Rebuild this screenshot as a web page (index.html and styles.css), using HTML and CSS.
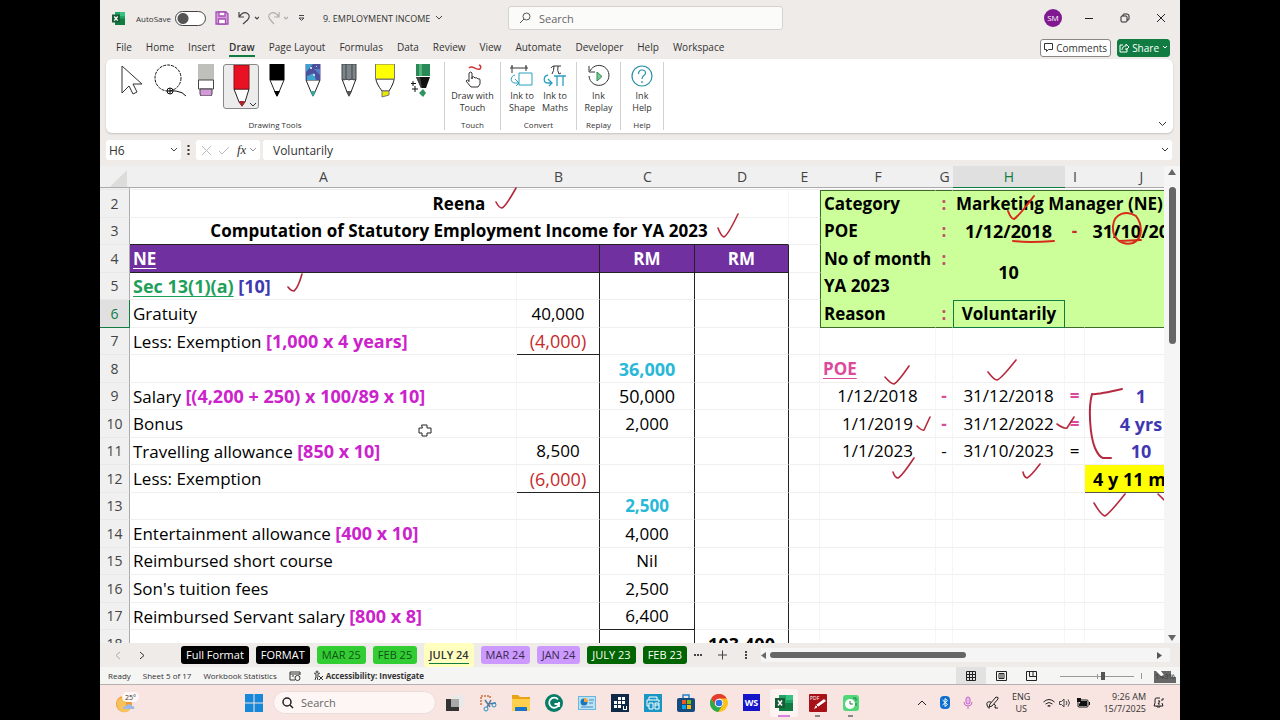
FILE: index.html
```html
<!DOCTYPE html>
<html lang="en">
<head>
<meta charset="utf-8">
<title>9. EMPLOYMENT INCOME - Excel</title>
<link rel="stylesheet" href="styles.css">
</head>
<body>
<div class="window">
  <header class="titlebar">
    <div class="quick">
      <svg class="app" width="13" height="13" viewBox="0 0 13 13"><path fill="#21a366" d="M3 0h10v13H3z"/><path fill="#107c41" d="M3 6.500h10V13H3z"/><path fill="#33c481" d="M8 0h5v4H8z"/><path fill="#185c37" d="M0 2.500h8v8H0z"/><path stroke="#fff" stroke-width="1.200" d="M2.200 4.500l3.500 4.200M5.700 4.500L2.200 8.700"/></svg>
      <label class="autosave">AutoSave <input type="checkbox" class="toggle"></label>
      <button class="plain" aria-label="Save"><svg width="14" height="14" viewBox="0 0 14 14" fill="none" stroke="#a54fb5" stroke-width="1.300"><path fill="#d9a0e0" d="M1 1h10l2 2v10H1z"/><path fill="#fff" d="M4 1h6v4H4zM3.500 8h7v5h-7z"/></svg></button>
      <button class="plain undo" aria-label="Undo"><svg width="21" height="14" viewBox="0 0 21 14" fill="none" stroke="#444" stroke-width="1.200"><path d="M1 1v5h5M1.500 5.500C4 2 7 1 9.500 2.500s2 4.500 0 6.500L5 13"/><path d="M17 6l2 2 2-2"/></svg></button>
      <button class="plain" aria-label="Redo"><svg width="21" height="14" viewBox="0 0 21 14" fill="none" stroke="#b0aeac" stroke-width="1.200"><path d="M11 1v5H6M10.500 5.500C8 2 5 1 2.500 2.500s-2 4.500 0 6.500L6 13"/><path d="M16 6l2 2 2-2"/></svg></button>
      <button class="plain" aria-label="Customise toolbar"><svg width="7" height="8" viewBox="0 0 7 8" fill="none" stroke="#444"><path d="M1 1.500h5M1 4l2.500 2.500L6 4z"/></svg></button>
      <button class="plain doc">9. EMPLOYMENT INCOME <svg width="8" height="6" viewBox="0 0 8 6" fill="none" stroke="#444"><path d="M1 1l3 3 3-3"/></svg></button>
    </div>
    <label class="search"><svg width="12" height="12" viewBox="0 0 12 12" fill="none" stroke="#555"><circle cx="7.500" cy="4.500" r="3.500"/><path d="M5 7L1 11"/></svg><input type="text" placeholder="Search" aria-label="Search"></label>
    <div class="controls">
      <span class="avatar">SM</span>
      <button class="plain" aria-label="Minimise"><svg width="10" height="10" viewBox="0 0 10 10" stroke="#222"><path d="M1 5.500h8"/></svg></button>
      <button class="plain" aria-label="Restore"><svg width="10" height="10" viewBox="0 0 10 10" fill="none" stroke="#222"><rect x="1" y="3" width="6" height="6" rx="1"/><path d="M3 3V2q0-1 1-1h3q2 0 2 2v3q0 1-1 1H7"/></svg></button>
      <button class="plain" aria-label="Close"><svg width="10" height="10" viewBox="0 0 10 10" stroke="#222"><path d="M1 1l8 8M9 1L1 9"/></svg></button>
    </div>
  </header>

  <nav class="menu">
    <button>File</button><button>Home</button><button>Insert</button><button class="on">Draw</button><button>Page Layout</button><button>Formulas</button><button>Data</button><button>Review</button><button>View</button><button>Automate</button><button>Developer</button><button>Help</button><button>Workspace</button>
    <span class="actions">
      <button class="comments"><svg width="9" height="9" viewBox="0 0 9 9" fill="none" stroke="#333"><path d="M.5.500h8v6h-4l-2 2v-2h-2z"/></svg>Comments</button>
      <button class="share"><svg width="10" height="10" viewBox="0 0 10 10" fill="none" stroke="#fff"><path d="M4 2H1v7h7V6M3 7c0-3 2-4 4-4V1l3 3-3 3V5"/></svg>Share<svg width="6" height="5" viewBox="0 0 6 5" fill="none" stroke="#fff"><path d="M1 1l2 2 2-2"/></svg></button>
    </span>
  </nav>

  <section class="ribbon">
    <div class="group drawing">
      <div class="tools">
        <button aria-label="Select"><svg width="24" height="32" viewBox="0 0 24 32" fill="#fff" stroke="#333"><path d="M2 2v27l7-7 4 8 4-2-4-8h9z"/></svg></button>
        <button aria-label="Lasso"><svg width="34" height="34" viewBox="0 0 34 34" fill="none" stroke="#111"><circle cx="15" cy="14" r="13" stroke-dasharray="3 1"/><circle cx="17" cy="27" r="3"/><path d="M14 27h9q7 1 10 5M17 24v6"/></svg></button>
        <button aria-label="Eraser"><svg width="16" height="32" viewBox="0 0 16 32" stroke="#444"><path fill="#bfbfbb" stroke="none" d="M0 0h16v16H0z"/><path fill="#fff" d="M.5 16h15v9H.5z"/><path fill="#d29bd8" d="M2 25h12v5l-1 2H3l-1-2z"/></svg></button>
        <button class="picked" aria-label="Red pen"><svg width="34" height="42" viewBox="0 0 34 42" fill="none"><path fill="#fff" stroke="#222" d="M10 24l5 13 3 4 3-4 4-13z"/><path fill="#e81224" stroke="#8c1018" d="M10 0h15v24H10z"/><path fill="#b3202b" d="M15 36h6l-3 6z"/><path stroke="#333" d="M26 38l3 3 3-3"/></svg></button>
        <button aria-label="Black pen"><svg width="16" height="34" viewBox="0 0 16 34"><path fill="#fff" stroke="#222" d="M1 16l5 12 2 4 2-4 5-12z"/><path d="M.500 0h15v16H.500zM5 27h6l-3 6z"/></svg></button>
        <button aria-label="Galaxy pen"><svg width="16" height="34" viewBox="0 0 16 34"><path fill="#fff" stroke="#222" d="M1 16l5 12 2 4 2-4 5-12z"/><path fill="#4b4f9c" d="M.500 0h15v16H.500z"/><path fill="#3fa2cf" d="M1 0h7L1 8zM2 12l7-3 2 7H2z"/><path fill="#5a7cc4" d="M9 5h6v6z"/><path fill="#c3d4ee" d="M5 3h2v2H5zM11 2h1v1h-1zM8 10h2v2H8z"/><path fill="#3fa39a" d="M5 27h6l-3 6z"/></svg></button>
        <button aria-label="Pencil"><svg width="16" height="34" viewBox="0 0 16 34"><path fill="#fff" stroke="#222" d="M1 15l5 13 2 4 2-4 5-13z"/><path fill="#7b868c" stroke="#444" d="M1 0h14v15l-2 1-2-1-3 1-3-1-2 1-2-1zM5 0v15M11 0v15"/><path fill="#555" d="M5 27h6l-3 6z"/></svg></button>
        <button aria-label="Highlighter"><svg width="20" height="34" viewBox="0 0 20 34"><path fill="#fff" stroke="#222" d="M1 15q0 4 6 12h7q5-8 5-12z"/><path fill="#ff0" stroke="#777" d="M.5 0h19v15H.5z"/><path fill="#e8e800" stroke="#777" d="M7 27h7v4l-7 2z"/></svg></button>
        <button aria-label="Action pen"><svg width="20" height="34" viewBox="0 0 20 34"><path fill="#2a8a57" d="M5 0h14v12H5z"/><path fill="#54b27c" d="M8 0h3v12H8z"/><path fill="#111" d="M5 13h14l-4 11h-5z"/><path fill="#444" d="M5 13h4l2 11h-1z"/><path fill="#2f9362" d="M12 25l3 4-3 4-4-4z"/><path stroke="#111" d="M2 17v5M0 19.500h5M4 22v6M1 25h6"/></svg></button>
      </div>
      <span class="caption">Drawing Tools</span>
    </div>
    <div class="group touch">
      <div class="row"><button><svg width="24" height="24" viewBox="0 0 24 24" fill="none" stroke="#333"><path stroke="#d13438" stroke-width="1.500" d="M8 4c4-4 6 3 11 1q2-3-1-4"/><path d="M8 18V9q2-2 3 0v6-2q2-1 3 1 2-1 3 1 2-1 2 1v4l-2 3h-7l-5-6q1-2 3 0"/></svg>Draw with<br>Touch</button></div>
      <span class="caption">Touch</span>
    </div>
    <div class="group convert">
      <div class="row">
        <button><svg width="24" height="24" viewBox="0 0 24 24" fill="none" stroke="#333"><path d="M2 2v7M16 2v5M0 4h18M2 1v2M16 1v2"/><path stroke="#2a9fc0" d="M9 9h13v12H9zM5 11c-5 1-5 8 0 8h3M5 15l4 4-3 3"/></svg>Ink to<br>Shape</button>
        <button><svg width="24" height="24" viewBox="0 0 24 24" fill="none" stroke="#333"><path d="M8 4q1-2 3-2h7M11 2q0 5-2 8M15 2q-1 5 1 8l2-1"/><path stroke="#2a9fc0" stroke-width="1.300" d="M11 12h12M14 12v10M20 12v10M5 11c-5 1-5 8 0 8h4M5 15l4 4-3 3"/></svg>Ink to<br>Maths</button>
      </div>
      <span class="caption">Convert</span>
    </div>
    <div class="group replay">
      <div class="row"><button><svg width="24" height="24" viewBox="0 0 24 24" fill="none" stroke="#333"><path d="M3 7a10 10 0 1 1-1 5M2 2v6h6"/><path fill="#7cc897" stroke="#2f8a50" d="M10 8v9l5-4.500z"/></svg>Ink<br>Replay</button></div>
      <span class="caption">Replay</span>
    </div>
    <div class="group help">
      <div class="row"><button><svg width="24" height="24" viewBox="0 0 24 24" fill="none" stroke="#2a8fa8" stroke-width="1.200"><circle cx="12" cy="12" r="10"/><path d="M8.500 10q0-4 3.500-4t3.500 3c0 3-3.500 2-3.500 6M12 17v2"/></svg>Ink<br>Help</button></div>
      <span class="caption">Help</span>
    </div>
    <button class="plain collapse" aria-label="Collapse ribbon"><svg width="9" height="6" viewBox="0 0 9 6" fill="none" stroke="#333"><path d="M1 1l3.500 3.500L8 1"/></svg></button>
  </section>

  <section class="formula">
    <button class="namebox"><span>H6</span><svg width="8" height="6" viewBox="0 0 8 6" fill="none" stroke="#444"><path d="M1 1l3 3 3-3"/></svg></button>
    <svg class="dots" width="3" height="10" viewBox="0 0 3 10" fill="#333"><path d="M.500 0h2v2h-2zM.500 4h2v2h-2zM.500 8h2v2h-2z"/></svg>
    <div class="fx"><svg width="9" height="9" viewBox="0 0 9 9" stroke="#bbb"><path d="M0 0l9 9M9 0L0 9"/></svg><svg width="12" height="9" viewBox="0 0 12 9" fill="none" stroke="#bbb"><path d="M1 5l3 3 7-7"/></svg><i>fx</i><svg width="8" height="6" viewBox="0 0 8 6" fill="none" stroke="#999"><path d="M1 1l3 3 3-3"/></svg></div>
    <label class="entry"><input type="text" value="Voluntarily" aria-label="Formula bar"><svg width="8" height="6" viewBox="0 0 8 6" fill="none" stroke="#333"><path d="M1 1l3 3 3-3"/></svg></label>
  </section>

  <main class="sheet">
    <div class="view">
      <table>
        <colgroup><col class="cn"><col class="ca"><col class="cb"><col class="cc"><col class="cd"><col class="ce"><col class="cf"><col class="cg"><col class="ch"><col class="ci"><col class="cj"></colgroup>
        <thead><tr><th class="corner"><svg width="18" height="17" viewBox="0 0 18 17"><path fill="#dcdcda" d="M17 0v17H0z"/></svg></th><th>A</th><th>B</th><th>C</th><th>D</th><th>E</th><th>F</th><th>G</th><th class="cur">H</th><th>I</th><th>J</th></tr></thead>
        <tbody>
        <tr class="sliver"><th></th><td colspan="4"></td><td></td><td></td><td></td><td></td><td></td><td></td></tr>
        <tr><th>2</th><td colspan="4" class="c b">Reena</td><td></td><td class="g gl gt b">Category</td><td class="g gt colon">:</td><td class="g gt b" colspan="3">Marketing Manager (NE)</td></tr>
        <tr><th>3</th><td colspan="4" class="c b title">Computation of Statutory Employment Income for YA 2023</td><td></td><td class="g gl b">POE</td><td class="g colon">:</td><td class="g c b n">1/12/2018</td><td class="g c b red">-</td><td class="g c b n">31/10/2023</td></tr>
        <tr><th>4</th><td colspan="2" class="p k u b">NE</td><td class="p k c b">RM</td><td class="p k c b">RM</td><td></td><td class="g gl b">No of month</td><td class="g colon">:</td><td rowspan="2" class="g c b n">10</td><td class="g"></td><td class="g"></td></tr>
        <tr><th>5</th><td class="b n"><span class="sec">Sec 13(1)(a)</span> <span class="blue">[10]</span></td><td class="k"></td><td class="k"></td><td class="k"></td><td></td><td class="g gl b">YA 2023</td><td class="g"></td><td class="g"></td><td class="g"></td></tr>
        <tr><th class="cur">6</th><td>Gratuity</td><td class="k c">40,000</td><td class="k"></td><td class="k"></td><td></td><td class="g gl gb b">Reason</td><td class="g gb colon">:</td><td class="g c b chosen">Voluntarily</td><td class="g gb"></td><td class="g gb"></td></tr>
        <tr><th>7</th><td>Less: Exemption <b>[1,000 x 4 years]</b></td><td class="k c red n sum">(4,000)</td><td class="k"></td><td class="k"></td><td></td><td></td><td></td><td></td><td></td><td></td></tr>
        <tr><th>8</th><td></td><td class="k"></td><td class="k c b n cyan">36,000</td><td class="k"></td><td></td><td class="b u pink">POE</td><td></td><td></td><td></td><td></td></tr>
        <tr><th>9</th><td>Salary <b>[(4,200 + 250) x 100/89 x 10]</b></td><td class="k"></td><td class="k c n">50,000</td><td class="k"></td><td></td><td class="c">1/12/2018</td><td class="c pink b">-</td><td class="c">31/12/2018</td><td class="c pink b">=</td><td class="c b n blue">1</td></tr>
        <tr><th>10</th><td>Bonus</td><td class="k"></td><td class="k c">2,000</td><td class="k"></td><td></td><td class="c">1/1/2019</td><td class="c pink b">-</td><td class="c">31/12/2022</td><td class="c pink b">=</td><td class="c b n blue">4 yrs</td></tr>
        <tr><th>11</th><td>Travelling allowance <b>[850 x 10]</b></td><td class="k c">8,500</td><td class="k"></td><td class="k"></td><td></td><td class="c">1/1/2023</td><td class="c">-</td><td class="c">31/10/2023</td><td class="c">=</td><td class="c b n blue">10</td></tr>
        <tr><th>12</th><td>Less: Exemption</td><td class="k c red n sum">(6,000)</td><td class="k"></td><td class="k"></td><td></td><td></td><td></td><td></td><td></td><td class="b n yellow">4 y 11 m</td></tr>
        <tr><th>13</th><td></td><td class="k"></td><td class="k c b cyan">2,500</td><td class="k"></td><td></td><td></td><td></td><td></td><td></td><td></td></tr>
        <tr><th>14</th><td>Entertainment allowance <b>[400 x 10]</b></td><td class="k"></td><td class="k c">4,000</td><td class="k"></td><td></td><td></td><td></td><td></td><td></td><td></td></tr>
        <tr><th>15</th><td>Reimbursed short course</td><td class="k"></td><td class="k c">Nil</td><td class="k"></td><td></td><td></td><td></td><td></td><td></td><td></td></tr>
        <tr><th>16</th><td>Son's tuition fees</td><td class="k"></td><td class="k c">2,500</td><td class="k"></td><td></td><td></td><td></td><td></td><td></td><td></td></tr>
        <tr><th>17</th><td>Reimbursed Servant salary <b>[800 x 8]</b></td><td class="k"></td><td class="k c sum">6,400</td><td class="k"></td><td></td><td></td><td></td><td></td><td></td><td></td></tr>
        <tr><th>18</th><td></td><td class="k"></td><td class="k"></td><td class="k c b n">103,400</td><td></td><td></td><td></td><td></td><td></td><td></td></tr>
        </tbody>
      </table>
      <svg class="ink" aria-hidden="true"><g transform="translate(-100 -166)" fill="none" stroke="#b52a3e" stroke-width="1.600" stroke-linecap="round" stroke-linejoin="round">
        <path d="M496 202q3 6 6 6 4-2 14-20M718 228q3 8 6 9 4-2 14-23M288 287q3 4 6 4 4-3 8-17"/>
        <path stroke="#d92b1c" stroke-width="2" d="M1008 211q3 8 6 8 4-2 20-23M1013 241q15 2 41 0M1136 216c-9-6-22-3-23 10-1 13 9 20 20 17 11-5 9-19 3-27M1119 241l22-1"/>
        <path d="M885 377q6 7 9 7 4-2 15-18M988 372q6 8 9 8 4-1 19-20M917 426q5 5 7 4l6-13M1057 424q7 5 10 4l7-11M893 472q2 6 5 6 4-2 16-20M1023 472q1 5 4 6 4-2 13-14M1094 503q7 12 11 13 5-3 20-22M1158 494l6 6"/>
        <path stroke-width="2" d="M1122 389q-26 6-30 5c-4 14-2 42 3 54q4 9 8 10l8 0"/>
        <path fill="#fff" stroke="#222" stroke-width="1" d="M422 425h5v3h4v5h-4v3h-5v-3h-3v-5h3z"/>
      </g></svg>
    </div>
    <div class="vscroll"><svg width="8" height="6" viewBox="0 0 8 6" fill="#666"><path d="M4 0l4 6H0z"/></svg><i></i><svg width="8" height="6" viewBox="0 0 8 6" fill="#666"><path d="M0 0h8L4 6z"/></svg></div>
  </main>

  <nav class="tabs">
    <div class="arrows"><svg width="6" height="9" viewBox="0 0 6 9" fill="none" stroke="#aaa"><path d="M5 1L1 4.500 5 8"/></svg><svg width="6" height="9" viewBox="0 0 6 9" fill="none" stroke="#333"><path d="M1 1l4 3.500L1 8"/></svg></div>
    <button class="black">Full Format</button><button class="black">FORMAT</button><button class="lime">MAR 25</button><button class="lime">FEB 25</button><button class="active"><span>JULY 24</span></button><button class="lilac">MAR 24</button><button class="lilac">JAN 24</button><button class="forest">JULY 23</button><button class="forest">FEB 23</button>
    <svg class="more" width="54" height="10" viewBox="0 0 54 10" fill="#444"><path d="M0 4h2v2H0zM3 4h2v2H3zM6 4h2v2H6zM24 4.500h9v1h-9zM28 .500h1v9h-1zM51 1h2v2h-2zM51 4h2v2h-2zM51 7h2v2h-2z"/></svg>
    <div class="hscroll"><svg width="5" height="7" viewBox="0 0 5 7" fill="#666"><path d="M5 0v7L0 3.500z"/></svg><i></i><svg width="5" height="7" viewBox="0 0 5 7" fill="#555"><path d="M0 0v7l5-3.500z"/></svg></div>
  </nav>

  <footer class="status">
    <span>Ready</span><span>Sheet 5 of 17</span><span>Workbook Statistics</span>
    <svg width="12" height="10" viewBox="0 0 12 10" fill="none" stroke="#333"><path d="M6 9H1V1h10v3M1 3h10M3 5h2"/><circle cx="8.500" cy="7" r="2.500"/></svg>
    <strong><svg width="11" height="11" viewBox="0 0 11 11" fill="none" stroke="#333"><circle cx="4" cy="2" r="1"/><path d="M1 3l2 1v3l-1 3M7 3L5 4v3M4 7l1 3M6 6l4 4M10 6l-4 4"/></svg>Accessibility: Investigate</strong>
    <div class="views">
      <button class="plain on" aria-label="Normal"><svg width="10" height="10" viewBox="0 0 10 10" fill="none" stroke="#222"><path d="M.5.500h9v9h-9zM3.500 0v10M6.500 0v10M0 3.500h10M0 6.500h10"/></svg></button>
      <button class="plain" aria-label="Page layout"><svg width="11" height="10" viewBox="0 0 11 10" fill="none" stroke="#222"><path d="M.5.500h10v9H.5zM3 2.500h5v5H3zM4 4h3M4 6h3"/></svg></button>
      <button class="plain" aria-label="Page break"><svg width="11" height="10" viewBox="0 0 11 10" fill="none" stroke="#222"><path d="M.5.500h10v9H.5zM3.500 0v5.500H10M7 0v5"/></svg></button>
    </div>
    <svg class="zoom" width="82" height="12" viewBox="0 0 82 12"><path stroke="#999" d="M0 6.500h74M37.500 4v5M81.500 3v6"/><path fill="#555" d="M41 2h4v8h-4z"/></svg>
    <span class="percent">143%<svg width="22" height="13" viewBox="0 0 22 13" fill="#444"><path d="M0 1h17v6h5v6H0z" opacity=".8"/><path fill="#fff" d="M1 0h5l4 5-3 1z"/></svg></span>
  </footer>

  <footer class="taskbar">
    <button class="plain weather" aria-label="Weather"><svg width="24" height="22" viewBox="0 0 24 22"><circle cx="9" cy="12" r="8" fill="#f29a2e"/><path fill="#f7c15c" d="M5 6q6 0 6 6t5 4a8 8 0 0 1-9 4Q1 17 2 9z"/><path fill="#9db9e6" d="M8 17q0-3 3-3 3-4 6 0 3 0 2 3z"/><rect x="7" y="0" width="17" height="10" rx="5" fill="#fff8f6"/><text x="10" y="8">25°</text></svg></button>
    <button class="plain start" aria-label="Start"><svg width="18" height="18" viewBox="0 0 18 18" fill="#1687d9"><path d="M0 0h8.500v8.500H0zM9.500 0H18v8.500H9.500zM0 9.500h8.500V18H0zM9.500 9.500H18V18H9.500z"/></svg></button>
    <label class="find"><svg width="12" height="12" viewBox="0 0 12 12" fill="none" stroke="#222" stroke-width="1.500"><circle cx="5" cy="5" r="4"/><path d="M8 8l3 3"/></svg><input type="text" placeholder="Search" aria-label="Search Windows"></label>
    <div class="apps">
      <button aria-label="Task view"><svg width="18" height="18" viewBox="0 0 18 18"><path fill="#e9e9e9" d="M6 1h12v12H6z"/><path fill="#333" d="M0 5h5v8h8v4H0z"/><path fill="#aaa" d="M5 5h8v8H5z"/></svg></button>
      <button aria-label="Snipping"><svg width="18" height="18" viewBox="0 0 18 18" fill="none"><path stroke="#c9703d" stroke-width="1.500" stroke-dasharray="2 1" d="M2 11V2h9v3"/><path stroke="#579" stroke-width="1.500" d="M6 6l5 7M12 6l-4 7M9 10l8-1"/><circle cx="7" cy="15" r="2" stroke="#2a8fc8"/><circle cx="15" cy="11" r="2" stroke="#2a8fc8"/></svg></button>
      <button aria-label="Files"><svg width="18" height="18" viewBox="0 0 18 18"><path fill="#e8a317" d="M0 1h6l2 2h10v4H0z"/><path fill="#ffd04e" d="M0 5h18v12H0z"/><path fill="#1b74c8" d="M3 17v-3q0-1 1-1h10q1 0 1 1v3z"/></svg></button>
      <button aria-label="Grammarly"><svg width="18" height="18" viewBox="0 0 18 18" fill="none"><circle cx="9" cy="9" r="9" fill="#067d68"/><path stroke="#fff" stroke-width="1.800" d="M13 5.500a5 5 0 1 0 1 4.500H9.500M14 8v5"/></svg></button>
      <button aria-label="Control panel"><svg width="18" height="18" viewBox="0 0 18 18"><path fill="#6bb6e0" d="M0 2h18v14H0z"/><path fill="#b9e2f5" d="M1 3h16v12H1z"/><circle cx="6" cy="8" r="3.500" fill="#1a76bd"/><path fill="#f2a33a" d="M6 8V4q4 0 4 4z"/><path stroke="#4a8ab8" d="M11 6h5M11 9h4M3 13h12"/></svg></button>
      <button aria-label="Calculator"><svg width="18" height="18" viewBox="0 0 18 18"><path fill="#0e2a47" d="M0 0h18v18H0z"/><path fill="#fff" d="M7 3h3v3H7zM11 3h3v3h-3zM3 7h3v3H3zM7 7h3v3H7zM11 7h3v3h-3zM3 11h3v3H3zM7 11h3v3H7zM12 12h1v3h2v-3h1v4h-4z"/></svg></button>
      <button aria-label="Printer"><svg width="18" height="18" viewBox="0 0 18 18" fill="none"><path fill="#1996c4" d="M0 0h18v18H0z"/><path stroke="#fff" d="M5 6V3h8v3M5 12H3V6h12v2M5 9h4v6H5zM11 9h4v6h-4zM11 11h4"/></svg></button>
      <button aria-label="Store"><svg width="18" height="18" viewBox="0 0 18 18"><path fill="none" stroke="#1a86d0" stroke-width="1.500" d="M6 5V1h6v4"/><rect y="4" width="18" height="14" rx="2" fill="#164b7e"/><path fill="#f35325" d="M5 6h4v4H5z"/><path fill="#81bc06" d="M10 6h4v4h-4z"/><path fill="#05a6f0" d="M5 11h4v4H5z"/><path fill="#ffba08" d="M10 11h4v4h-4z"/></svg></button>
      <button aria-label="Chrome"><svg width="18" height="18" viewBox="0 0 18 18"><circle cx="9" cy="9" r="9" fill="#fbc116"/><path fill="#e33b2e" d="M1.200 4.500A9 9 0 0 1 16.800 4.500H9L5 11z"/><path fill="#2da94f" d="M1.200 4.500a9 9 0 0 0 7 13.500l4.500-7-7 1z"/><circle cx="9" cy="9" r="4.200" fill="#fff"/><circle cx="9" cy="9" r="3.300" fill="#2a72e8"/></svg></button>
      <button aria-label="WS"><span class="ws">WS</span></button>
      <button class="open" aria-label="Excel"><svg width="18" height="18" viewBox="0 0 18 18"><path fill="#21a366" d="M4 1h14v16H4z"/><path fill="#107c41" d="M4 9h14v8H4z"/><path fill="#33c481" d="M11 1h7v5h-7z"/><path fill="#185c37" d="M0 4h10v10H0z"/><path stroke="#fff" stroke-width="1.500" d="M3 6.500l4 5M7 6.500l-4 5"/></svg></button>
      <button class="run" aria-label="PDF"><svg width="18" height="18" viewBox="0 0 18 18"><rect width="18" height="18" rx="1" fill="#a81118"/><path fill="#fff" d="M5 15l2-4 8-6 2 2-8 6z"/><path stroke="#a81118" d="M7 11l2 2M8 14l8-5"/><text x="1" y="6" fill="#fff">PDF</text></svg></button>
      <button class="run" aria-label="Clock"><svg width="18" height="18" viewBox="0 0 18 18" fill="none"><rect x="1" y="1" width="16" height="16" rx="3" fill="#50d878"/><circle cx="8" cy="10" r="5" fill="#fff"/><path stroke="#237a42" d="M8 7v3h3M11 4h3v3M14 9v3"/></svg></button>
    </div>
    <div class="tray">
      <svg width="10" height="7" viewBox="0 0 10 7" fill="none" stroke="#222"><path d="M1 6l4-4 4 4"/></svg>
      <svg width="10" height="13" viewBox="0 0 10 13"><rect width="10" height="13" rx="4" fill="#0d6fcf"/><path fill="none" stroke="#fff" d="M2.500 4l5 4.500L5 10.500v-8l2.500 2-5 4.500"/></svg>
      <svg width="10" height="13" viewBox="0 0 10 13" fill="none" stroke="#c368c8"><rect x="3" y="1" width="4" height="7" rx="2" fill="#e8b8ea"/><path d="M1 6q0 4 4 4t4-4M5 10v3"/></svg>
      <svg width="13" height="13" viewBox="0 0 13 13" fill="none" stroke="#222"><path d="M4 8l6-7q3 0 2 2L6 10l-3 1zM5 6Q0 5 1 9t3 3M8 8q2 0 1 4h3"/></svg>
      <span class="lang">ENG<br>US</span>
      <svg class="wifi" width="12" height="10" viewBox="0 0 12 10" fill="none" stroke="#222"><path d="M.5 4q5.500-5 11 0M2.500 6q3.500-3 7 0M4.500 8q1.500-1 3 0M6 8v1"/></svg>
      <svg width="12" height="10" viewBox="0 0 12 10" fill="none" stroke="#444"><path d="M.5 3.500h2L5 1v8L2.500 6.500h-2zM7 3q2 2 0 4M9 1.500q3 3.500 0 7"/></svg>
      <svg width="13" height="10" viewBox="0 0 13 10"><rect x="1" y="2" width="10" height="7" rx="1" fill="#fff" stroke="#111"/><path fill="#111" d="M4 3h6v5H2V6zM12 4h1v3h-1zM0 0h4v4H0z"/></svg>
      <span class="clock">9:26 AM<br>15/7/2025</span>
      <svg width="11" height="11" viewBox="0 0 11 11" fill="none" stroke="#222"><path d="M7 1H3Q2 1 2 3v3L1 9h9L9 6M4 9v1h3V9M5 4h2L5 7h2M8 3h2V1"/></svg>
    </div>
  </footer>
</div>
</body>
</html>
```
FILE: styles.css
```css
* { box-sizing: border-box; }
body { margin: 0; padding: 0 100px; background: #000; font-family: "Segoe UI", "Open Sans", "Noto Sans", sans-serif; font-size: 10px; color: #333; }
button, input { font: inherit; color: inherit; border: 0; padding: 0; background: none; }
button { white-space: nowrap; }
input { outline: 0; min-width: 0; }
svg { display: block; flex: none; }
.plain { display: flex; align-items: center; }

.window { height: 100vh; display: flex; flex-direction: column; background: #efebe8; overflow: hidden; }

.titlebar { flex: none; height: 36px; display: grid; grid-template-columns: 408px minmax(0, 275px) 1fr; align-items: center; }
.quick { display: flex; align-items: center; gap: 9px; padding-left: 12px; }
.autosave { display: flex; align-items: center; gap: 4px; margin: 0 0 0 2px; font-size: 8px; }
.toggle { appearance: none; width: 31px; height: 15px; margin: 0; border: 1px solid #444; border-radius: 8px; background: radial-gradient(circle at 7px 50%, #555 0 5px, #fff 6px); }
.doc { gap: 5px; margin-left: 9px; font-size: 9px; }
.search { height: 24px; display: flex; align-items: center; gap: 8px; padding: 0 10px; background: #fbfbfa; border: 1px solid #d4d1ce; border-radius: 3px; font-size: 11px; }
.search input { flex: 1; }
::placeholder { color: #666; opacity: 1; }
.controls { justify-self: end; display: flex; align-items: center; gap: 26px; padding-right: 14px; }
.avatar { width: 18px; height: 18px; margin-right: -4px; border-radius: 50%; background: #80198f; color: #fff; font-size: 8px; line-height: 18px; text-align: center; }

.menu { flex: none; height: 23px; display: flex; align-items: center; gap: 14px; padding: 0 10px 0 16px; }
.menu > button { height: 18px; border-bottom: 2px solid transparent; }
.menu > .on { font-weight: 600; border-color: #107c41; }
.actions { margin-left: auto; display: flex; gap: 6px; }
.actions button { height: 18px; display: flex; align-items: center; gap: 3px; padding: 0 3px; border: 1px solid #8a8886; border-radius: 3px; background: #fff; }
.actions .share { padding: 0 1px; background: #107c41; border-color: #107c41; color: #fff; }

.ribbon { flex: none; height: 74px; margin: 0 7px 0 6px; display: flex; padding: 3px 6px 3px 0; background: #fff; border-radius: 6px; box-shadow: 0 1px 2px #c5c1be; }
.group { display: flex; flex-direction: column; justify-content: space-between; align-items: center; border-right: 1px solid #d0d0d0; }
.drawing { width: 339px; }
.touch { width: 56px; }
.convert { width: 76px; }
.replay { width: 44px; }
.help { width: 43px; }
.caption { font-size: 8px; line-height: 10px; }
.row { display: flex; gap: 3px; }
.row button { width: 50px; display: flex; flex-direction: column; align-items: center; font-size: 9px; line-height: 12px; }
.row svg { margin: 2px 0; }
.convert .row button { width: 30px; }
.replay .row button, .help .row button { width: 40px; }
.tools { align-self: stretch; display: grid; grid-template-columns: 26px 50px 22px 48px 24px 48px 24px 48px 24px; align-items: start; padding: 2px 0 0 13px; }
.tools button { display: flex; justify-content: center; }
.tools .picked { width: 36px; height: 45px; justify-self: center; border: 1px solid #888; border-radius: 3px; background: #ececec; }
.collapse { margin-left: auto; align-self: flex-end; height: 12px; }

.formula { flex: none; height: 20px; margin: 7px 8px 6px 6px; display: flex; align-items: center; font-size: 12px; }
.formula > :not(.dots) { height: 20px; background: #fff; border-radius: 3px; }
.namebox { width: 75px; display: flex; align-items: center; justify-content: space-between; padding: 0 3px; font-family: "Comic Sans MS", "Open Sans", cursive; font-size: 12px; }
.dots { margin: 0 6px; }
.fx { width: 64px; display: flex; align-items: center; gap: 7px; padding-left: 6px; }
.fx i { font: italic 13px "Liberation Serif", serif; margin-right: -4px; }
.entry { flex: 1; margin-left: 3px; display: flex; align-items: center; padding: 0 3px 0 10px; font-family: "Comic Sans MS", "Open Sans", cursive; }
.entry input { flex: 1; }

.sheet { flex: 1; min-height: 0; display: flex; background: #fff; }
.view { flex: 1; min-width: 0; position: relative; overflow: hidden; }
.ink { position: absolute; inset: 0; width: 100%; height: 100%; pointer-events: none; }
table { width: 1098px; table-layout: fixed; border-collapse: separate; border-spacing: 0; }
.cn { width: 30px; } .ca { width: 387px; } .cb { width: 83px; } .cc { width: 95px; } .cd { width: 94px; } .ce { width: 31px; }
.cf { width: 116px; } .cg { width: 17px; } .ch { width: 112px; } .ci { width: 20px; } .cj { width: 113px; }
th { padding: 0; background: #f0f0f0; color: #444; font-size: 14px; font-weight: 400; line-height: 20px; }
thead th { height: 22px; border-bottom: 1px solid #aaa; }
tbody th { border-right: 1px solid #aaa; border-bottom: 1px solid #e8e8e8; }
.corner svg { margin: 3px 0 0 10px; }
th.cur { background: #e0e0e0; color: #107c41; border-color: #107c41; }
td { padding: 0 0 0 3px; overflow: hidden; white-space: nowrap; border-right: 1px solid #f5f5f5; border-bottom: 1px solid #efefef; color: #000; font-family: "Comic Sans MS", "Open Sans", cursive; font-size: 17px; line-height: 24px; }
tbody tr { height: 28px; }
tbody tr:nth-child(odd) { height: 27px; }
tbody tr.sliver { height: 2px; }
.sliver th, .sliver td { height: 2px; line-height: 0; }
td b { color: #cc22cc; font-size: 18px; }
.b, td b { font-weight: 700; }
.n { font-size: 18px; }
.c { padding: 0; text-align: center; }
.u { text-decoration: underline; text-underline-offset: 3px; }
.k { border-right-color: #222; }
.title { border-bottom-color: #222; }
.p { background: #7030a0; color: #fff; border-bottom-color: #222; }
.sum { border-bottom-color: #222; }
.sec { color: #1fa05a; text-decoration: underline; text-underline-offset: 3px; text-decoration-skip-ink: none; }
.blue { color: #4038b0; }
.red { color: #c62a2a; }
.pink { color: #dc4a9c; }
.cyan { color: #28b8d8; }
.g { background: #ccff99; border-color: #ccff99; }
.gl { border-left: 1px solid #3c6b2a; }
.gt { border-top: 1px solid #3c6b2a; }
.gb { border-bottom-color: #3c6b2a; }
.colon { padding: 0; text-align: center; color: #c0506a; font-weight: 700; }
.chosen { border: 1px solid #107c41; }
.yellow { padding-left: 8px; background: #ff0; border-bottom-color: #555; }
.vscroll { flex: none; width: 16px; display: flex; flex-direction: column; align-items: center; justify-content: space-between; padding: 3px 0 2px; background: #f5f5f5; }
.vscroll i { width: 7px; height: 157px; margin: 12px 0 auto; border-radius: 4px; background: #666; }

.tabs { flex: none; height: 24px; display: flex; align-items: center; gap: 7px; padding-right: 10px; font-size: 11px; }
.arrows { width: 74px; display: flex; gap: 18px; padding-left: 15px; }
.tabs button { height: 18px; padding: 0 5px; border-radius: 3px; line-height: 18px; }
.tabs .black { background: #000; color: #fff; }
.tabs .lime { background: #32cd32; color: #14521c; }
.tabs .lilac { background: #cc99ff; color: #3a2850; }
.tabs .forest { background: #006400; color: #fff; }
.tabs .active { align-self: stretch; height: auto; background: #ffffc0; font-weight: 600; }
.active span { display: block; line-height: 16px; border-bottom: 1px solid #107c41; }
.hscroll { flex: 1; display: flex; align-items: center; justify-content: space-between; height: 14px; margin-left: 6px; padding: 0 8px 0 0; background: #f5f5f5; }
.hscroll i { width: 196px; height: 6px; margin: 0 auto 0 4px; border-radius: 3px; background: #666; }

.status { flex: none; height: 18px; display: flex; align-items: center; gap: 12px; padding: 0 4px 0 8px; background: #f5f5f4; border-bottom: 1px solid #b8b0b0; font-size: 8px; }
.status strong { display: flex; align-items: center; gap: 2px; font-weight: 700; }
.views { margin-left: auto; display: flex; }
.views button { width: 30px; height: 17px; justify-content: center; }
.views .on { background: #e2e2e2; }
.status .zoom { margin-left: 2px; }
.percent { position: relative; width: 22px; text-align: center; }
.percent svg { position: absolute; top: 0; left: 0; }

.taskbar { flex: none; height: 35px; display: flex; align-items: center; background: #f8e4e0; }
.weather { margin-left: 15px; }
.weather text { font-size: 7px; fill: #333; }
.start { margin-left: 106px; }
.find { width: 163px; height: 23px; margin-left: 10px; display: flex; align-items: center; gap: 7px; padding: 0 8px; border: 1px solid #eadcd8; border-radius: 12px; background: #fdf6f4; font-size: 11px; }
.find input { flex: 1; }
.apps { display: flex; margin-left: 2px; }
.apps button { width: 33px; height: 28px; display: flex; justify-content: center; align-items: center; }
.apps text { font-size: 5px; }
.ws { width: 17px; height: 17px; background: #1414c8; color: #fff; font-weight: 700; font-size: 9px; line-height: 17px; }
.apps .open { width: 28px; margin: 0 3px 0 2px; background: linear-gradient(90deg, transparent 8px, #d884d8 8px 20px, transparent 20px) bottom / 100% 2px no-repeat #fdf4f2; border-radius: 3px; }
.apps .run { background: linear-gradient(90deg, transparent 14px, #888 14px 19px, transparent 19px) bottom / 100% 2px no-repeat; }
.tray { margin-left: auto; display: flex; align-items: center; gap: 13px; padding-right: 16px; }
.lang { text-align: center; line-height: 12px; font-size: 9px; }
.tray .wifi { margin-right: -2px; }
.wifi + svg { margin: 0 -7px; }
.clock { text-align: right; line-height: 12px; font-size: 9px; margin-right: -6px; }
```
